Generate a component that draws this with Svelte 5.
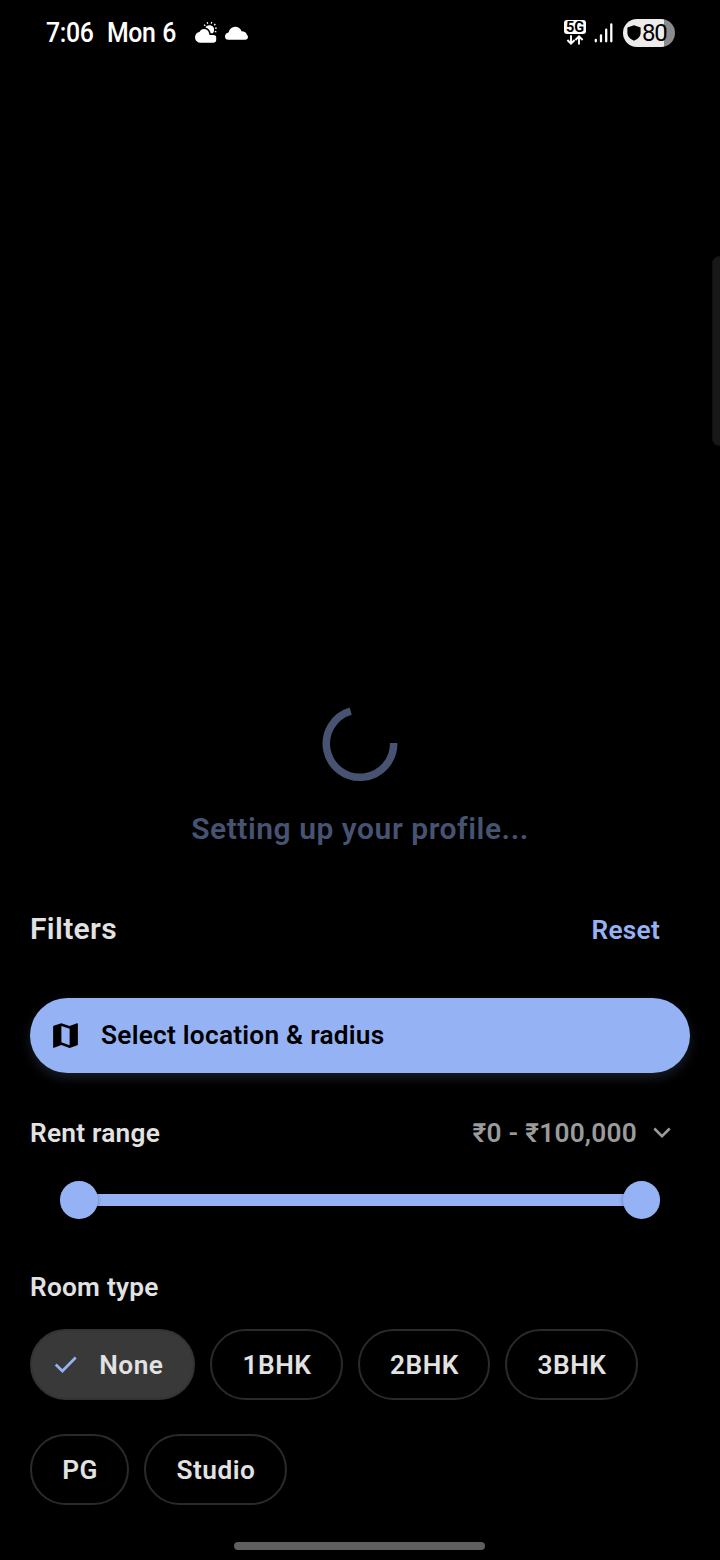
<script>
  const roomTypes = [
    { label: 'None', cls: 'none', selected: true },
    { label: '1BHK', cls: 'bhk' },
    { label: '2BHK', cls: 'bhk' },
    { label: '3BHK', cls: 'bhk' },
    { label: 'PG', cls: 'pg' },
    { label: 'Studio', cls: 'studio' }
  ];
</script>

<main class="screen">
  <header class="status">
    <span class="time">7:06</span>
    <span class="date">Mon 6</span>
    <svg class="weather" width="56" height="24" viewBox="0 0 56 24" fill="#fff">
      <path d="M6.600 21.800A5.600 5.600 0 0 1 1 16.400c0-2.700 1.800-4.900 4.400-5.300C6.500 8.800 8 8 9.800 8c2.700 0 4.600 1.500 5.200 3.900l.5 2h3.700c1.700 0 3 .8 3 2.200v2.900c0 1.700-1.300 2.800-3 2.800z" />
      <path d="M11.500 6.400c.8-1.400 2.300-2.200 3.900-2.100 2.800.1 4.900 2 4.700 4.600 0 1.400-.6 2.500-1.400 3.300h-2c-.6-3-2.400-5.100-5.200-5.800z" />
      <path d="M10 3.600l1.300 1.300M13.200 1.200l.5 1.600M17.700 1l-.4 1.700M20.200 4.200l1.200-1.200M21 7.200h1.800M20.800 10.400l1.600.6" stroke="#fff" stroke-width="1.300" />
      <path d="M34.500 18.800a3.600 3.600 0 0 1-3.500-3.600c0-2 1.500-3.600 3.500-3.800C35.500 8 38 5.800 41.200 5.800c3 0 5.400 1.700 6.300 4.500 3 .1 5 1.300 5.400 3.500.7.5 1.100 1.300 1.100 2.200 0 1.600-1.200 2.800-2.900 2.800z" />
    </svg>
    <div class="network">
      <span class="fiveg">5G</span>
      <svg width="18" height="10" viewBox="0 0 18 10" fill="none" stroke="#fff" stroke-width="1.900">
        <path d="M5 .3v8M1.400 5l3.600 3.600L8.600 5M13 9.600V1.700M9.400 5L13 1.400 16.600 5" />
      </svg>
    </div>
    <svg class="signal" width="19" height="20" viewBox="0 0 19 20" stroke="#fff" stroke-width="2.300" stroke-linecap="round">
      <path d="M1.800 18.300v-1.500M7 18.300v-6M12.200 18.300V6.700M17.300 18.300V1.500" />
    </svg>
    <div class="battery">
      <svg width="14" height="16" viewBox="0 0 14 16"><path d="M7 .2l6.600 2.300v5c0 4-2.700 6.600-6.600 8.200C3.100 14.100.4 11.500.4 7.500v-5z" fill="#000" /></svg>
      <span>80</span>
    </div>
  </header>

  <div class="edge-handle"></div>

  <section class="loading">
    <svg width="76" height="76" viewBox="0 0 76 76">
      <path d="M71.700 37A33.700 33.700 0 1 1 28.700 5.200" fill="none" stroke="#465472" stroke-width="7.500" />
    </svg>
    <p>Setting up your profile...</p>
  </section>

  <section class="filters">
    <div class="heading">
      <h1>Filters</h1>
      <button class="reset">Reset</button>
    </div>

    <button class="location">
      <svg width="33" height="33" viewBox="0 0 24 24"><path d="M20.500 3l-.16.030L15 5.100 9 3 3.360 4.900c-.21.070-.36.250-.36.480V20.500c0 .28.220.5.500.5l.16-.030L9 18.900l6 2.100 5.640-1.900c.21-.070.360-.25.360-.48V3.500c0-.28-.22-.5-.5-.5zM15 19l-6-2.110V5l6 2.110V19z" fill="#000" /></svg>
      <span>Select location &amp; radius</span>
    </button>

    <div class="rent">
      <h2>Rent range</h2>
      <span class="amount">₹0 - ₹100,000</span>
      <svg width="18" height="12" viewBox="0 0 18 12" fill="none" stroke="#9b9b9b" stroke-width="2.500"><path d="M1.300 1.500L9 9.200l7.700-7.700" /></svg>
    </div>

    <div class="slider">
      <i class="thumb"></i><i class="track"></i><i class="thumb"></i>
    </div>

    <h2 class="room">Room type</h2>
    <div class="chips">
      {#each roomTypes as room}
        <button class="chip {room.cls}" class:selected={room.selected}>
          {#if room.selected}
            <svg width="24" height="18" viewBox="0 0 24 18" fill="none" stroke="#95b3f4" stroke-width="2.700"><path d="M1.700 8.500l6.700 6.500L21.700 1.500" /></svg>
          {/if}
          <span>{room.label}</span>
        </button>
      {/each}
    </div>
  </section>
  <div class="home"></div>
</main>

<style>
  :global(body) { background: #000; overflow: hidden; }
  * { box-sizing: border-box; margin: 0; padding: 0; }
  svg { display: block; flex: none; }
  .screen {
    position: relative;
    display: flex;
    flex-direction: column;
    width: 720px;
    height: 1560px;
    overflow: hidden;
    background: #000;
    color: #e2e2e2;
    font-family: Roboto, "Liberation Sans", sans-serif;
    font-weight: 600;
    font-size: 26.25px;
    line-height: 36px;
    letter-spacing: .24px;
    white-space: nowrap;
  }
  button { border: 0; background: none; color: inherit; font: inherit; letter-spacing: inherit; white-space: nowrap; }
  h1, h2 { font-weight: 600; font-size: inherit; }
  .status { display: flex; align-items: center; height: 66px; padding: 0 45px 0 46px; color: #fff; flex: none; }
  .time, .date { font-size: 27px; font-weight: 500; letter-spacing: -.4px; word-spacing: 1px; transform: scaleX(.92); transform-origin: left; }
  .time { width: 61px; }
  .date { width: 87px; }
  .network { margin: 0 8px 0 auto; width: 22px; display: flex; flex-direction: column; align-items: center; gap: .5px; }
  .fiveg { width: 22px; height: 14.500px; border-radius: 3px; background: #fff; color: #000; font-size: 14.500px; line-height: 15px; font-weight: 700; text-align: center; letter-spacing: 0; }
  .network { padding-bottom: 2px; }
  .signal { margin-right: 10px; }
  .battery { display: flex; align-items: center; gap: 1px; width: 52px; height: 28px; padding-left: 4px; border-radius: 14px; background: linear-gradient(90deg, #ececec 41px, #8b8b8b 41px); color: #000; }
  .battery span { font-size: 24px; font-weight: 450; line-height: 28px; letter-spacing: -1.2px; }
  .edge-handle { position: absolute; top: 256px; right: -8px; width: 16px; height: 190px; border: 1px solid #101010; border-radius: 7px; background: #181818; }
  .loading { display: flex; flex-direction: column; align-items: center; height: 814px; padding-top: 640px; flex: none; }
  .loading p { margin-top: 29px; font-size: 30px; line-height: 36px; color: #465472; letter-spacing: .54px; }
  .filters { padding: 0 30px; }
  .heading { display: flex; align-items: center; justify-content: space-between; height: 98px; padding-right: 30px; }
  h1 { font-size: 30px; letter-spacing: .35px; }
  .reset { color: #95b3f4; padding-top: 2px; }
  .location { display: flex; align-items: center; gap: 19px; width: 660px; height: 75px; margin-top: 19.500px; padding-left: 19px; border-radius: 38px; background: #95b3f4; color: #000; box-shadow: 0 5px 12px rgba(149,179,244,.16); }
  .rent { display: flex; align-items: center; height: 36px; margin-top: 42.500px; padding-right: 19px; }
  .amount { margin: 0 16px 0 auto; color: #9b9b9b; }
  .slider { display: flex; align-items: center; height: 38px; margin: 30px 30px 0; }
  .thumb { position: relative; width: 37.500px; height: 37.500px; flex: none; border-radius: 50%; background: #95b3f4; box-shadow: 0 1px 4px rgba(0,0,0,.3); }
  .track { flex: 1; height: 12px; margin: 0 -4px; background: #95b3f4; }
  .room { margin-top: 50px; }
  .chips { display: flex; flex-wrap: wrap; gap: 33.750px 15px; margin-top: 24px; }
  .chip { display: flex; align-items: center; justify-content: center; height: 71.250px; border: 2px solid #2a2a2a; border-radius: 36px; letter-spacing: .5px; padding-left: 1px; }
  .bhk { width: 132.500px; }
  .none { width: 165.250px; gap: 21.500px; padding-left: 0; padding-right: 8px; }
  .pg { width: 99.250px; }
  .studio { width: 142.500px; }
  .selected { background: #393939; border-color: #333; }
  .home { position: absolute; left: 234px; top: 1542px; width: 251px; height: 8px; border-radius: 4px; background: #5f5f5f; }
</style>
